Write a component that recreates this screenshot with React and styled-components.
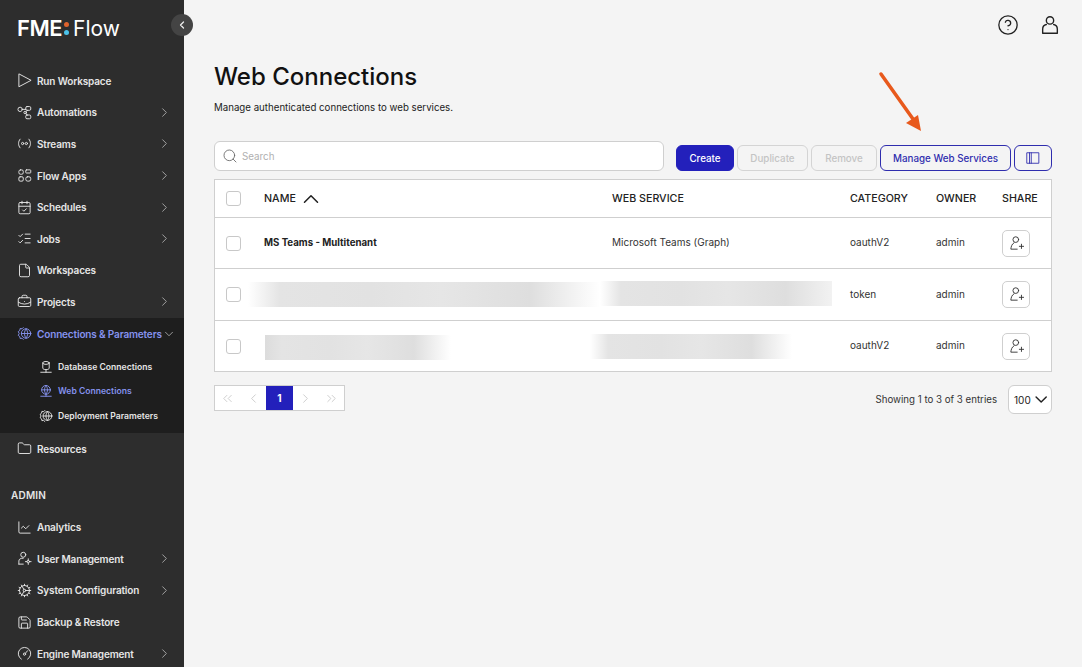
import React from "react";
import styled, { createGlobalStyle } from "styled-components";
import {
  ChevronRight,
  ChevronDown,
  ChevronLeft,
  ChevronUp,
  ChevronsLeft,
  ChevronsRight,
  Search,
  CircleHelp,
  CalendarCheck,
  ListChecks,
  File,
  BriefcaseBusiness,
  Folder,
  ChartLine,
  Save,
  Cog,
} from "lucide-react";

const GlobalStyle = createGlobalStyle`
  html, body {
    margin: 0;
    height: 100%;
    overflow: hidden;
    background: #f4f4f4;
    font-family: "Inter", "Liberation Sans", sans-serif;
  }
`;

const Svg = ({ size = 16, children, sw = 1.5 }) => (
  <svg width={size} height={size} viewBox="0 0 24 24" fill="none" stroke="currentColor" strokeWidth={sw} strokeLinecap="round" strokeLinejoin="round">
    {children}
  </svg>
);

const PlayIcon = () => (
  <Svg>
    <path d="M3 2v20L22 12z" />
  </Svg>
);
const FlowIcon = () => (
  <Svg>
    <circle cx="5" cy="7" r="3.5" />
    <rect x="14" y="2.500" width="8" height="6" rx="2" />
    <rect x="14" y="16" width="8" height="6" rx="2" />
    <circle cx="13" cy="12" r="2" />
    <path d="M8.500 7H14M14.500 13.500 16 16M15 10l2-1.500" />
  </Svg>
);
const StreamIcon = () => (
  <Svg sw={1.700}>
    <circle cx="9" cy="12" r="1.800" />
    <circle cx="15" cy="12" r="1.800" />
    <path d="M5 5c-3.500 4-3.500 10 0 14M19 5c3.500 4 3.500 10 0 14" />
  </Svg>
);
const AppsIcon = () => (
  <Svg>
    <rect x="3" y="3" width="7" height="7" rx="2.500" />
    <rect x="14" y="3" width="8" height="5" rx="1" />
    <rect x="3" y="14" width="7" height="7" rx="2" />
    <rect x="14" y="14" width="8" height="7" rx="3" />
  </Svg>
);
const GlobeGear = () => (
  <Svg>
    <path d="M10 2.500 8 4.500 5 4 4.500 7 2 9l1.500 3L2 15l2.500 2L5 20l3-.5 2 2" />
    <circle cx="14.500" cy="12" r="7.500" />
    <path d="M7 12h15M14.500 4.500c-3.500 4.500-3.500 10.500 0 15M14.500 4.500c3.500 4.500 3.500 10.500 0 15" />
  </Svg>
);
const DbIcon = () => (
  <Svg>
    <ellipse cx="12" cy="5" rx="5.500" ry="2.500" />
    <path d="M6.500 5v9c0 1.500 2.500 2.500 5.500 2.500s5.500-1 5.500-2.500V5M12 16.500V21M3 21h18" />
  </Svg>
);
const GlobeIcon = () => (
  <Svg>
    <circle cx="12" cy="10" r="7.500" />
    <path d="M4.500 10h15M12 2.500c-3.500 4.500-3.500 10.500 0 15M12 2.500c3.500 4.500 3.500 10.500 0 15M12 17.500V21M3 21h18" />
  </Svg>
);
const UserGear = () => (
  <Svg>
    <circle cx="10" cy="6" r="4" />
    <path d="M3 21v-5c0-3 2.500-4.500 7-4.500M3 21h7" />
    <circle cx="18" cy="17" r="2" />
    <path d="M18 12.500V15M18 19v2.500M13.500 17H16M20 17h2.500" />
  </Svg>
);
const GaugeIcon = () => (
  <Svg>
    <path d="M7 21a10 10 0 1 1 10 0" />
    <circle cx="12" cy="13" r="1.800" />
    <path d="m13.500 11.500 3.500-4" />
  </Svg>
);
const UserPlus = () => (
  <Svg size={17} sw={1.300}>
    <circle cx="11" cy="6.500" r="4" />
    <path d="M8.500 11C5 13 4.500 16.500 4 20h9M16 16h6M19 13v6" />
  </Svg>
);
const UserIcon = () => (
  <Svg size={22} sw={1.500}>
    <circle cx="12" cy="7" r="4" />
    <path d="M8 11.500c-2.500.5-4 2.500-4 5V21h16v-4.500c0-2.500-1.500-4.500-4-5" />
  </Svg>
);
const ColumnsIcon = () => (
  <Svg size={14} sw={1.500}>
    <rect x="2" y="3" width="20" height="18" />
    <path d="M6 3v18M9 3v18" />
  </Svg>
);

const mainNav = [
  { label: "Run Workspace", icon: <PlayIcon /> },
  { label: "Automations", icon: <FlowIcon />, more: true },
  { label: "Streams", icon: <StreamIcon />, more: true },
  { label: "Flow Apps", icon: <AppsIcon />, more: true },
  { label: "Schedules", icon: <CalendarCheck />, more: true },
  { label: "Jobs", icon: <ListChecks />, more: true },
  { label: "Workspaces", icon: <File /> },
  { label: "Projects", icon: <BriefcaseBusiness />, more: true },
];

const adminNav = [
  { label: "Analytics", icon: <ChartLine /> },
  { label: "User Management", icon: <UserGear />, more: true },
  { label: "System Configuration", icon: <Cog />, more: true },
  { label: "Backup & Restore", icon: <Save /> },
  { label: "Engine Management", icon: <GaugeIcon />, more: true },
];

const NavRow = ({ item }) => (
  <NavItem>
    <NavIcon>{item.icon}</NavIcon>
    <NavLabel>{item.label}</NavLabel>
    {item.more && (
      <NavArrow>
        <ChevronRight size={15} strokeWidth={1.500} />
      </NavArrow>
    )}
  </NavItem>
);

const rows = [
  { name: "MS Teams - Multitenant", service: "Microsoft Teams (Graph)", category: "oauthV2" },
  {
    nameBlur: { $width: 352, $offset: -16, $up: true },
    serviceBlur: { $width: 232, $offset: -12, $up: true, $hardEnd: true },
    category: "token",
    tall: true,
  },
  {
    nameBlur: { $width: 186, $offset: 1, $hardStart: true },
    serviceBlur: { $width: 202, $offset: -22 },
    category: "oauthV2",
  },
];

function App() {
  return (
    <Page>
      <GlobalStyle />
      <Sidebar>
        <Collapse>
          <ChevronLeft size={12} strokeWidth={2.500} />
        </Collapse>
        <Logo>
          FME
          <LogoDots>
            <LogoDot $color="#e0632c" />
            <LogoDot $color="#4cc3ea" />
          </LogoDots>
          <LogoFlow>Flow</LogoFlow>
        </Logo>
        <Nav>
          {mainNav.map((item) => (
            <NavRow key={item.label} item={item} />
          ))}
        </Nav>
        <Expanded>
          <NavItem $active>
            <NavIcon>
              <GlobeGear />
            </NavIcon>
            <NavLabel>Connections &amp; Parameters</NavLabel>
            <NavArrowDown>
              <ChevronDown size={14} strokeWidth={1.500} />
            </NavArrowDown>
          </NavItem>
          <SubList>
            <SubItem>
              <DbIcon />
              <span>Database Connections</span>
            </SubItem>
            <SubItem $active>
              <GlobeIcon />
              <span>Web Connections</span>
            </SubItem>
            <SubItem>
              <GlobeGear />
              <span>Deployment Parameters</span>
            </SubItem>
          </SubList>
        </Expanded>
        <NavRow item={{ label: "Resources", icon: <Folder /> }} />
        <SectionTitle>ADMIN</SectionTitle>
        <Nav>
          {adminNav.map((item) => (
            <NavRow key={item.label} item={item} />
          ))}
        </Nav>
      </Sidebar>

      <Main>
        <TopBar>
          <TopIcon>
            <CircleHelp size={22} strokeWidth={1.400} />
          </TopIcon>
          <TopIcon>
            <UserIcon />
          </TopIcon>
        </TopBar>
        <Title>Web Connections</Title>
        <Subtitle>Manage authenticated connections to web services.</Subtitle>

        <Toolbar>
          <SearchBox>
            <Search size={16} strokeWidth={1.300} color="#666" />
            <span>Search</span>
          </SearchBox>
          <Button $primary $width={58}>Create</Button>
          <Button $disabled $width={71}>Duplicate</Button>
          <Button $disabled $width={66}>Remove</Button>
          <Button $outline $width={131}>Manage Web Services</Button>
          <Button $outline $width={38}>
            <ColumnsIcon />
          </Button>
        </Toolbar>

        <Table>
          <HeadRow>
            <Cell>
              <Check />
            </Cell>
            <HeadCell>
              NAME
              <SortIcon>
                <ChevronUp size={26} strokeWidth={1.400} />
              </SortIcon>
            </HeadCell>
            <HeadCell>WEB SERVICE</HeadCell>
            <HeadCell>CATEGORY</HeadCell>
            <HeadCell>OWNER</HeadCell>
            <HeadCell>SHARE</HeadCell>
          </HeadRow>
          {rows.map((row, i) => (
            <Row key={i} $tall={row.tall}>
              <Cell>
                <Check />
              </Cell>
              <NameCell>{row.name || <Blur {...row.nameBlur} />}</NameCell>
              <TextCell>{row.service || <Blur {...row.serviceBlur} />}</TextCell>
              <TextCell>{row.category}</TextCell>
              <TextCell>admin</TextCell>
              <Cell>
                <ShareButton>
                  <UserPlus />
                </ShareButton>
              </Cell>
            </Row>
          ))}
        </Table>

        <Footer>
          <Pager>
            <PageCell>
              <ChevronsLeft size={15} strokeWidth={1.300} />
            </PageCell>
            <PageCell>
              <ChevronLeft size={15} strokeWidth={1.300} />
            </PageCell>
            <PageCell $active>1</PageCell>
            <PageCell>
              <ChevronRight size={15} strokeWidth={1.300} />
            </PageCell>
            <PageCell>
              <ChevronsRight size={15} strokeWidth={1.300} />
            </PageCell>
          </Pager>
          <Entries>Showing 1 to 3 of 3 entries</Entries>
          <PageSize>
            100
            <ChevronDown size={21} strokeWidth={1.700} />
          </PageSize>
        </Footer>

        <Arrow width="60" height="76" viewBox="0 0 60 76">
          <path d="M4 5 L36 50" stroke="#e8591c" strokeWidth="3.500" strokeLinecap="round" />
          <path d="M29 54 L41 46 L44 62 Z" fill="#e8591c" />
        </Arrow>
      </Main>
    </Page>
  );
}

export default App;

const Page = styled.div`
  display: flex;
  width: 100%;
  height: 100vh;
  overflow: hidden;
`;

const Sidebar = styled.aside`
  position: relative;
  flex: 0 0 184px;
  width: 184px;
  min-width: 0;
  height: 100%;
  background: #2d2d2d;
  color: #e6e6e6;
  padding-top: 14px;
  box-sizing: border-box;
`;

const Collapse = styled.div`
  position: absolute;
  top: 14px;
  left: 171px;
  width: 22px;
  height: 22px;
  border-radius: 50%;
  background: #444;
  color: #eee;
  display: flex;
  align-items: center;
  justify-content: center;
`;

const Logo = styled.div`
  display: flex;
  align-items: center;
  height: 28px;
  padding-left: 17px;
  margin-bottom: 23px;
  color: #fff;
  font-size: 22px;
  font-weight: 600;
  letter-spacing: -0.5px;
`;

const LogoDots = styled.span`
  display: flex;
  flex-direction: column;
  gap: 3px;
  margin: 0 4px 0 2px;
`;

const LogoDot = styled.i`
  width: 5px;
  height: 5px;
  border-radius: 50%;
  background: ${(p) => p.$color};
`;

const LogoFlow = styled.span`
  font-weight: 400;
  font-size: 21px;
  letter-spacing: 0;
`;

const Nav = styled.nav`
  display: flex;
  flex-direction: column;
`;

const NavItem = styled.div`
  display: flex;
  align-items: center;
  height: 31.600px;
  padding-left: 18px;
  font-size: 10px;
  font-weight: 600;
  letter-spacing: -0.15px;
  color: ${(p) => (p.$active ? "#8592ee" : "#e6e6e6")};
`;

const NavIcon = styled.span`
  display: flex;
  align-items: center;
  justify-content: center;
  width: 12px;
  height: 13px;
  margin-right: 7px;

  svg {
    flex: none;
    width: 15px;
    height: 15px;
    stroke-width: 1.500;
  }
`;

const NavLabel = styled.span`
  white-space: nowrap;
`;

const NavArrow = styled.span`
  display: flex;
  margin-left: auto;
  margin-right: 12px;
  color: #a8a8a8;
`;

const NavArrowDown = styled(NavArrow)`
  margin-right: 9px;
`;

const Expanded = styled.div`
  background: #1e1e1e;
  padding-bottom: 5px;
`;

const SubList = styled.div`
  display: flex;
  flex-direction: column;
  padding-top: 5px;
`;

const SubItem = styled.div`
  display: flex;
  align-items: center;
  gap: 5px;
  height: 24.500px;
  padding-left: 39px;
  font-size: 8.600px;
  font-weight: 600;
  white-space: nowrap;
  color: ${(p) => (p.$active ? "#8592ee" : "#e6e6e6")};

  svg {
    width: 14px;
    height: 14px;
    flex: none;
    stroke-width: 1.600;
  }
`;

const SectionTitle = styled.div`
  padding: 24px 0 8px 11px;
  font-size: 10px;
  font-weight: 600;
  line-height: 15px;
  letter-spacing: 0.2px;
`;

const Main = styled.main`
  position: relative;
  flex: 1;
  min-width: 0;
  padding: 0 30px;
  color: #222;
`;

const TopBar = styled.div`
  display: flex;
  justify-content: flex-end;
  align-items: center;
  gap: 20px;
  height: 50px;
  margin-right: -9px;
`;

const TopIcon = styled.span`
  display: flex;
  color: #222;
`;

const Title = styled.h1`
  margin: 11px 0 0;
  font-size: 24px;
  line-height: 32px;
  font-weight: 500;
  color: #111;
`;

const Subtitle = styled.p`
  margin: 7px 0 0;
  font-size: 9.700px;
  line-height: 16px;
`;

const Toolbar = styled.div`
  display: flex;
  align-items: flex-end;
  gap: 3px;
  height: 30px;
  margin-top: 25px;
`;

const SearchBox = styled.div`
  display: flex;
  align-items: center;
  gap: 4px;
  width: 450px;
  height: 30px;
  margin-right: 9px;
  padding-left: 7px;
  box-sizing: border-box;
  background: #fff;
  border: 1px solid #cfcfcf;
  border-radius: 6px;
  color: #b0b0b0;
  font-size: 9.800px;
`;

const Button = styled.div`
  display: flex;
  align-items: center;
  justify-content: center;
  width: ${(p) => p.$width}px;
  height: 26px;
  box-sizing: border-box;
  border-radius: 6px;
  font-size: 9.800px;
  font-weight: 500;
  white-space: nowrap;
  background: ${(p) => (p.$primary ? "#2320bb" : "transparent")};
  color: ${(p) => (p.$primary ? "#fff" : p.$disabled ? "#c4c4c4" : "#2f2dae")};
  border: 1px solid ${(p) => (p.$primary ? "#2320bb" : p.$disabled ? "#d4d4d4" : "#2f2dae")};
`;

const Table = styled.div`
  margin-top: 8px;
  background: #fff;
  border: 1px solid #cfcfcf;
  font-size: 10px;
`;

const gridColumns = "49px 348px 238px 86px 66px 1fr";

const HeadRow = styled.div`
  display: grid;
  grid-template-columns: ${gridColumns};
  align-items: center;
  height: 37px;
  border-bottom: 1px solid #cfcfcf;
`;

const Row = styled.div`
  display: grid;
  grid-template-columns: ${gridColumns};
  align-items: center;
  height: ${(p) => (p.$tall ? 51 : 50)}px;
  border-bottom: 1px solid #cfcfcf;

  &:last-child {
    border-bottom: 0;
  }
`;

const Cell = styled.div`
  display: flex;
  align-items: center;
  min-width: 0;
  white-space: nowrap;
  color: #333;
`;

const TextCell = styled(Cell)`
  padding-bottom: 2px;
`;

const HeadCell = styled(Cell)`
  font-size: 10.700px;
  font-weight: 500;
  color: #222;
`;

const SortIcon = styled.span`
  display: flex;
  margin-left: 2px;
`;

const NameCell = styled(Cell)`
  padding-bottom: 1px;
  font-size: 9.700px;
  font-weight: 700;
  color: #222;
`;

const Check = styled.span`
  display: block;
  width: 13px;
  height: 13px;
  margin-left: 11px;
  border: 1px solid #c8c8c8;
  border-radius: 3px;
  background: #fff;
`;

const Blur = styled.div`
  flex: none;
  width: ${(p) => p.$width}px;
  height: 25px;
  margin-left: ${(p) => p.$offset}px;
  margin-top: ${(p) => (p.$up ? 0 : 3)}px;
  background: linear-gradient(
    90deg,
    ${(p) => (p.$hardStart ? "#dcdcdc" : "rgba(228, 228, 228, 0)")} 0,
    #e4e4e4 9%,
    #e2e2e2 35%,
    #e6e6e6 55%,
    #dedede 80%,
    ${(p) => (p.$hardEnd ? "#f2f2f2" : "rgba(228, 228, 228, 0)")} 100%
  );
`;

const ShareButton = styled.span`
  display: flex;
  align-items: center;
  justify-content: center;
  width: 26px;
  height: 25px;
  border: 1px solid #cfcfcf;
  border-radius: 5px;
  color: #333;
`;

const Footer = styled.div`
  display: flex;
  align-items: flex-start;
  margin-top: 13px;
`;

const Pager = styled.div`
  display: flex;
  height: 26px;
  box-sizing: border-box;
  background: #fff;
  border: 1px solid #cfcfcf;
`;

const PageCell = styled.span`
  display: flex;
  align-items: center;
  justify-content: center;
  width: ${(p) => (p.$active ? 27 : 25.500)}px;
  background: ${(p) => (p.$active ? "#2320bb" : "transparent")};
  color: ${(p) => (p.$active ? "#fff" : "#c4c4c4")};
  font-size: 10px;
  font-weight: 700;
`;

const Entries = styled.span`
  margin-left: auto;
  margin-right: 11px;
  line-height: 29px;
  font-size: 9.700px;
  color: #333;
`;

const PageSize = styled.div`
  display: flex;
  align-items: center;
  justify-content: space-between;
  width: 44px;
  height: 29px;
  padding: 0 0 0 5px;
  box-sizing: border-box;
  background: #fff;
  border: 1px solid #cfcfcf;
  border-radius: 6px;
  font-size: 10px;
  color: #222;
`;

const Arrow = styled.svg`
  position: absolute;
  left: 693px;
  top: 69px;
`;
